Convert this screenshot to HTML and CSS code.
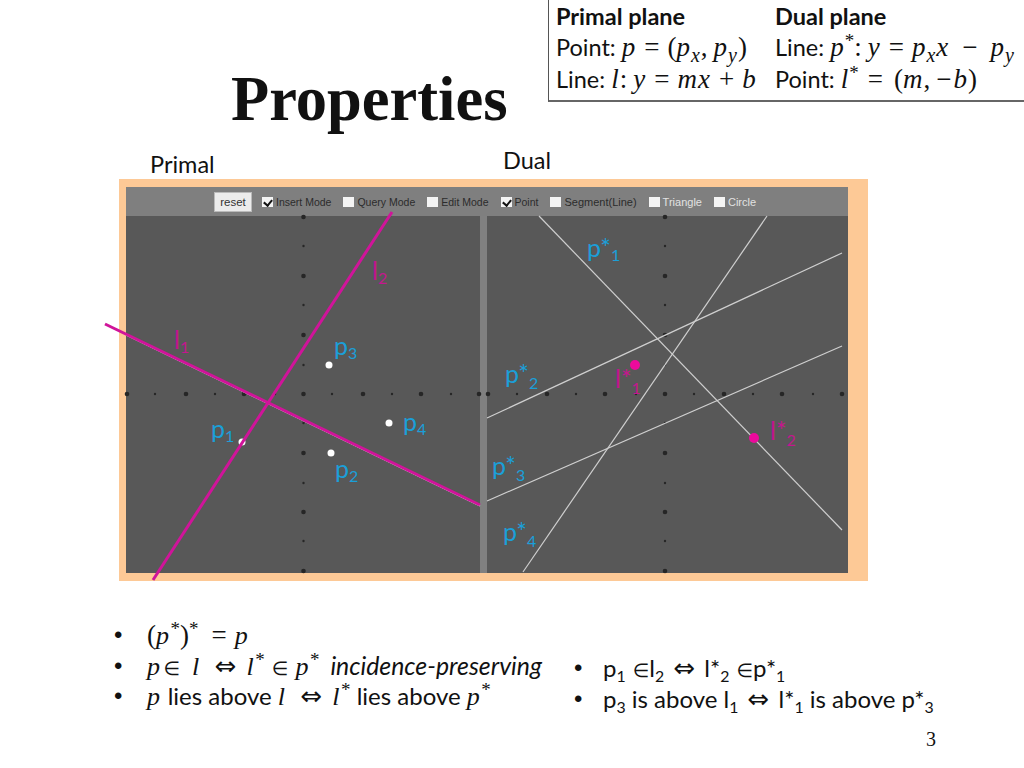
FILE: index.html
```html
<!DOCTYPE html>
<html lang="en">
<head>
<meta charset="utf-8">
<title>Properties</title>
<link rel="stylesheet" href="styles.css">
</head>
<body>
<main class="slide">
  <header class="head">
    <h1 class="title">Properties</h1>
    <section class="defs">
      <div class="def-col def-primal">
        <div class="def-head">Primal plane</div>
        <div class="def-line">Point: <span class="m">p</span><span class="o">=</span><span class="r">(</span><span class="m">p<sub>x</sub></span><span class="r comma">,</span><span class="m">p<sub>y</sub></span><span class="r">)</span></div>
        <div class="def-line">Line: <span class="m">l</span><span class="r">:</span> <span class="m">y</span><span class="o">=</span><span class="m">mx</span><span class="o">+</span><span class="m">b</span></div>
      </div>
      <div class="def-col">
        <div class="def-head">Dual plane</div>
        <div class="def-line">Line: <span class="m">p</span><sup class="st">*</sup><span class="r">:</span> <span class="m">y</span><span class="o">=</span><span class="m">p<sub>x</sub>x</span><span class="o wide">&minus;</span><span class="m">p<sub>y</sub></span></div>
        <div class="def-line">Point: <span class="m">l</span><sup class="st">*</sup><span class="o loose">=</span><span class="r">(</span><span class="m">m</span><span class="r comma">,</span><span class="r minus">&minus;</span><span class="m">b</span><span class="r">)</span></div>
      </div>
    </section>
  </header>

  <div class="captions">
    <span class="cap-primal">Primal</span>
    <span class="cap-dual">Dual</span>
  </div>

  <figure class="figure">
    <div class="app">
      <div class="toolbar">
        <button class="reset" type="button">reset</button>
        <span class="opt"><i class="box on"></i>Insert Mode</span>
        <span class="opt"><i class="box"></i>Query Mode</span>
        <span class="opt"><i class="box"></i>Edit Mode</span>
        <span class="opt"><i class="box on"></i>Point</span>
        <span class="opt seg"><i class="box"></i>Segment(Line)</span>
        <span class="opt dim"><i class="box"></i>Triangle</span>
        <span class="opt dim"><i class="box"></i>Circle</span>
      </div>
      <svg class="plot" viewBox="126 216 722 357" xmlns="http://www.w3.org/2000/svg">
        <rect class="divider" x="480" y="216" width="7" height="357"/>
        <g class="dot-big">
          <circle cx="303.500" cy="217" r="2.300"/><circle cx="303.500" cy="276" r="2.300"/><circle cx="303.500" cy="335" r="2.300"/><circle cx="303.500" cy="453" r="2.300"/><circle cx="303.500" cy="512" r="2.300"/><circle cx="303.500" cy="571" r="2.300"/>
          <circle cx="665" cy="217" r="2.300"/><circle cx="665" cy="276" r="2.300"/><circle cx="665" cy="335" r="2.300"/><circle cx="665" cy="453" r="2.300"/><circle cx="665" cy="512" r="2.300"/><circle cx="665" cy="571" r="2.300"/>
          <circle cx="127" cy="394" r="2.300"/><circle cx="186" cy="394" r="2.300"/><circle cx="244" cy="394" r="2.300"/><circle cx="303.500" cy="394" r="2.300"/><circle cx="363" cy="394" r="2.300"/><circle cx="421" cy="394" r="2.300"/><circle cx="479" cy="394" r="2.300"/>
          <circle cx="488" cy="394" r="2.300"/><circle cx="547" cy="394" r="2.300"/><circle cx="605" cy="394" r="2.300"/><circle cx="665" cy="394" r="2.300"/><circle cx="724" cy="394" r="2.300"/><circle cx="782" cy="394" r="2.300"/><circle cx="842" cy="394" r="2.300"/>
        </g>
        <g class="dot-small">
          <circle cx="303.500" cy="246" r="1.200"/><circle cx="303.500" cy="305" r="1.200"/><circle cx="303.500" cy="365" r="1.200"/><circle cx="303.500" cy="423" r="1.200"/><circle cx="303.500" cy="483" r="1.200"/><circle cx="303.500" cy="541" r="1.200"/>
          <circle cx="665" cy="246" r="1.200"/><circle cx="665" cy="305" r="1.200"/><circle cx="665" cy="365" r="1.200"/><circle cx="665" cy="423" r="1.200"/><circle cx="665" cy="483" r="1.200"/><circle cx="665" cy="541" r="1.200"/>
          <circle cx="155" cy="394" r="1.200"/><circle cx="215" cy="394" r="1.200"/><circle cx="275" cy="394" r="1.200"/><circle cx="332" cy="394" r="1.200"/><circle cx="392" cy="394" r="1.200"/><circle cx="451" cy="394" r="1.200"/>
          <circle cx="517" cy="394" r="1.200"/><circle cx="576" cy="394" r="1.200"/><circle cx="636" cy="394" r="1.200"/><circle cx="694" cy="394" r="1.200"/><circle cx="753" cy="394" r="1.200"/><circle cx="813" cy="394" r="1.200"/>
        </g>
        <g class="dual-lines">
          <line x1="539" y1="216" x2="842" y2="530"/>
          <line x1="767" y1="216" x2="523" y2="572"/>
          <line x1="487" y1="418" x2="842" y2="253"/>
          <line x1="487" y1="501" x2="842" y2="346"/>
        </g>
        <line class="white-line" x1="126" y1="335" x2="480" y2="506"/>
        <g class="pts"><circle cx="329" cy="365" r="3.500"/><circle cx="389" cy="423" r="3.500"/><circle cx="331" cy="453" r="3.500"/><circle cx="242" cy="442" r="3.500"/></g>
        <g class="mag-pts"><circle cx="635" cy="365" r="5"/><circle cx="754" cy="438" r="5"/></g>
        <line class="mag-line" x1="105" y1="324" x2="480" y2="505"/>
        <line class="mag-line" x1="392" y1="212" x2="153" y2="580"/>
        <g class="lbl-blue">
          <text x="587" y="257">p*<tspan class="sb" dy="4">1</tspan></text>
          <text x="505" y="383">p*<tspan class="sb" dy="6">2</tspan></text>
          <text x="492" y="475">p*<tspan class="sb" dy="6">3</tspan></text>
          <text x="503" y="541">p*<tspan class="sb" dy="6">4</tspan></text>
          <text x="334" y="355">p<tspan class="sb" dy="4">3</tspan></text>
          <text x="211" y="438">p<tspan class="sb" dy="4">1</tspan></text>
          <text x="403" y="431">p<tspan class="sb" dy="4">4</tspan></text>
          <text x="335" y="478">p<tspan class="sb" dy="4">2</tspan></text>
        </g>
        <g class="lbl-mag">
          <text x="372" y="280">l<tspan class="sb" dy="4">2</tspan></text>
          <text x="174" y="349">l<tspan class="sb" dy="4">1</tspan></text>
          <text x="615" y="388">l*<tspan class="sb" dy="6">1</tspan></text>
          <text x="770" y="440">l*<tspan class="sb" dy="6">2</tspan></text>
        </g>
      </svg>
    </div>
  </figure>

  <div class="notes">
    <ul class="list list-left">
      <li><span class="r">(</span><span class="m">p</span><sup class="st">*</sup><span class="r">)</span><sup class="st">*</sup><span class="o gap">=</span><span class="m">p</span></li>
      <li><span class="m">p</span><span class="in first">&isin;</span><span class="m">l</span><span class="arrow">&hArr;</span><span class="m">l</span><sup class="st">*</sup><span class="in">&isin;</span><span class="m">p</span><sup class="st">*</sup><em class="inc">incidence-preserving</em></li>
      <li><span class="m">p</span> lies above <span class="m">l</span><span class="arrow">&hArr;</span><span class="m">l</span><sup class="st">*</sup> lies above <span class="m">p</span><sup class="st">*</sup></li>
    </ul>
    <ul class="list list-right">
      <li>p<sub>1</sub> <span class="el">&isin;</span>l<sub>2</sub> <span class="arrow tight">&hArr;</span> l*<sub>2</sub> <span class="el">&isin;</span>p*<sub>1</sub></li>
      <li>p<sub>3</sub> is above l<sub>1</sub> <span class="arrow tight">&hArr;</span> l*<sub>1</sub> is above p*<sub>3</sub></li>
    </ul>
  </div>

  <footer class="pageno">3</footer>
</main>
</body>
</html>
```

FILE: styles.css
```css
* { box-sizing: border-box; }
html, body { margin: 0; padding: 0; background: #fff; }
.slide {
  width: 1024px;
  height: 768px;
  overflow: hidden;
  display: flex;
  flex-direction: column;
  font-family: "Lato", "Liberation Sans", sans-serif;
  color: #111;
}
.head {
  display: flex;
  align-items: flex-start;
  height: 148px;
}
.title {
  width: 548px;
  margin: 66px 0 0;
  padding-left: 231px;
  font: bold 62.500px/66px "Liberation Serif", serif;
  color: #111;
  white-space: nowrap;
}
.defs {
  width: 476px;
  height: 102px;
  padding: 0 0 0 7px;
  display: flex;
  border-left: 1px solid #555;
  border-bottom: 2px solid #666;
  font-size: 23.500px;
}
.def-primal { width: 219px; }
.def-head { font-weight: 700; height: 31px; line-height: 33px; }
.def-line { height: 32px; line-height: 32px; white-space: nowrap; }
.m { font-family: "Liberation Serif", serif; font-style: italic; font-size: 27px; letter-spacing: 1px; }
.r { font-family: "Liberation Serif", serif; font-size: 27px; font-style: normal; }
.r.comma { margin-right: 6px; }
.r.minus { margin-right: 2px; }
.o { font-family: "Liberation Serif", serif; font-size: 27px; margin: 0 8px; font-style: normal; }
.o.loose { margin: 0 11px 0 9px; }
.o.wide { margin: 0 13px 0 13px; }
.o.gap { margin: 0 8px 0 13px; }
sub { font-size: 66%; line-height: 0; vertical-align: -0.3em; }
.m sub { font-size: 20px; }
.st { font-family: "Liberation Serif", serif; font-size: 19px; line-height: 0; vertical-align: 0.45em; }

.captions {
  display: flex;
  height: 31px;
  font-size: 23.500px;
}
.cap-primal { margin: 3px 0 0 150px; line-height: 27px; width: 353px; }
.cap-dual { margin: -1px 0 0; line-height: 27px; }

.figure {
  margin: 0 0 0 119px;
  width: 749px;
  height: 402px;
  padding: 8px 20px 7px 7px;
  background: #fdc996;
  flex: none;
}
.app { width: 722px; height: 386px; background: #585858; }
.toolbar {
  height: 29px;
  background: #7f7f7f;
  display: flex;
  align-items: center;
  padding-left: 88px;
  gap: 12px;
  font: 10.500px/14px "Liberation Sans", sans-serif;
  color: #2c2c2c;
}
.reset {
  width: 38px;
  height: 20px;
  margin-right: -2px;
  padding: 0;
  border: 1px solid #bbb;
  background: #ececec;
  font: 11.500px "Liberation Sans", sans-serif;
  color: #333;
}
.opt { display: flex; align-items: center; gap: 3px; white-space: nowrap; }
.opt.seg { font-size: 11px; }
.opt.dim { color: #e2e2e2; font-size: 11px; }
.box {
  width: 11px;
  height: 10px;
  background: #f4f4f4;
  display: block;
  position: relative;
}
.box.on::after {
  content: "";
  position: absolute;
  left: 3px;
  top: 1px;
  width: 4px;
  height: 6px;
  border: solid #111;
  border-width: 0 2px 2px 0;
  transform: rotate(40deg);
}
.plot { display: block; width: 722px; height: 357px; overflow: visible; }
.divider { fill: #808080; }
.dot-big { fill: #262626; }
.dot-small { fill: #262626; }
.dual-lines line { stroke: #cfcfcf; stroke-width: 1.200; }
.white-line { stroke: #e8e8e8; stroke-width: 1.200; }
.pts { fill: #fff; }
.mag-pts { fill: #ec0a9c; }
.mag-line { stroke: #d0149a; stroke-width: 3; }
.lbl-blue text { fill: #1b9fd8; font: 25px "Lato", sans-serif; }
.lbl-mag text { fill: #c4168f; font: 25px "Lato", sans-serif; }
.sb { font-size: 16px; }

.notes {
  display: flex;
  align-items: flex-start;
  margin-top: 39px;
  font-size: 24px;
}
.list { list-style: none; margin: 0; padding: 0; }
.list li {
  position: relative;
  white-space: nowrap;
}
.list li::before {
  content: "\2022";
  position: absolute;
  font-family: "Liberation Sans", sans-serif;
}
.list .m { font-size: 26px; letter-spacing: 1.500px; }
.list-left { width: 460px; margin-left: 147px; }
.list-left li { height: 30.500px; line-height: 30px; }
.list-left li::before { left: -33px; }
.list-right { margin: 32px 0 0 -4px; font-size: 24px; }
.list-right li { height: 31px; line-height: 31px; }
.list-right li::before { left: -29px; }
.arrow { font-family: "DejaVu Sans", sans-serif; margin: 0 10px 0 14px; font-size: 26px; line-height: 0; }
.arrow.tight { margin: 0 3px; }
.in { font-family: "DejaVu Sans", sans-serif; font-size: 19px; margin: 0 7px; line-height: 0; }
.in.first { margin: 0 12px 0 2px; }
.el { font-family: "DejaVu Sans", sans-serif; font-size: 19px; margin-left: 1px; line-height: 0; }
.inc { margin-left: 11px; font-style: italic; font-size: 24.800px; line-height: 0; }

.pageno {
  margin: 0;
  position: absolute;
  left: 926px;
  top: 729px;
  font: 20px/20px "Liberation Serif", serif;
}
```
